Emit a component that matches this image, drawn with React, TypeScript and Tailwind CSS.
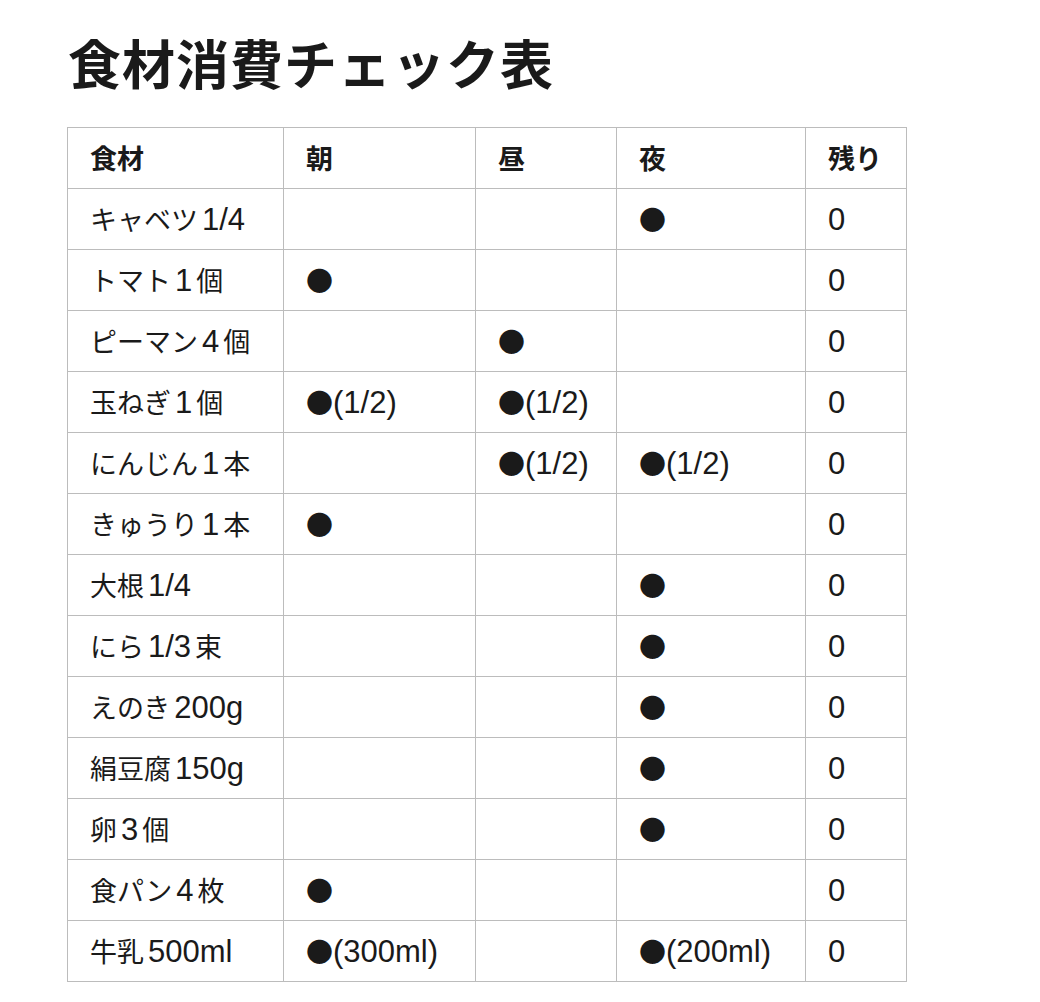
const rows: [string, string, string, string, string][] = [
  ["キャベツ1/4", "", "", "●", "0"],
  ["トマト1個", "●", "", "", "0"],
  ["ピーマン4個", "", "●", "", "0"],
  ["玉ねぎ1個", "●(1/2)", "●(1/2)", "", "0"],
  ["にんじん1本", "", "●(1/2)", "●(1/2)", "0"],
  ["きゅうり1本", "●", "", "", "0"],
  ["大根1/4", "", "", "●", "0"],
  ["にら1/3束", "", "", "●", "0"],
  ["えのき200g", "", "", "●", "0"],
  ["絹豆腐150g", "", "", "●", "0"],
  ["卵3個", "", "", "●", "0"],
  ["食パン4枚", "●", "", "", "0"],
  ["牛乳500ml", "●(300ml)", "", "●(200ml)", "0"],
];

const headers = ["食材", "朝", "昼", "夜", "残り"];
const widths = ["w-[216px]", "w-[192px]", "w-[141px]", "w-[189px]", "w-[101px]"];

// split latin runs out so they get a Helvetica-like face and the small
// gap that iOS puts between kana/kanji and latin letters
function Cell({ text }: { text: string }) {
  const parts = text.split(/([A-Za-z0-9/().]+)/).filter(Boolean);
  return (
    <>
      {parts.map((p, i) => {
        if (!/^[A-Za-z0-9/().]+$/.test(p)) return <span key={i}>{p}</span>;
        const prev = parts[i - 1];
        const next = parts[i + 1];
        const gapL = prev && !prev.endsWith("●");
        const gapR = !!next;
        return (
          <span
            key={i}
            className={`text-[31px] ${gapL ? "ml-[4px]" : ""} ${gapR ? "mr-[4px]" : ""}`}
            style={{ fontFamily: '"Liberation Sans", Arial, sans-serif' }}
          >
            {p}
          </span>
        );
      })}
    </>
  );
}

export default function App() {
  return (
    <div
      className="min-h-screen bg-white text-[#1a1a1a] pl-[67px] pt-[28px]"
      style={{ fontFamily: '"Noto Sans CJK JP", "Noto Sans", sans-serif' }}
    >
      <h1 className="text-[53px] font-bold leading-[68px] tracking-[1px] pl-[1px]">
        食材消費チェック表
      </h1>
      <table className="mt-[31px] border-collapse table-fixed w-[840px] text-[27px]">
        <thead>
          <tr className="h-[61px]">
            {headers.map((h, i) => (
              <th
                key={h}
                className={`${widths[i]} border border-[#bcbcbc] pl-[22px] py-0 text-left font-bold`}
              >
                {h}
              </th>
            ))}
          </tr>
        </thead>
        <tbody>
          {rows.map((r) => (
            <tr key={r[0]} className="h-[61px]">
              {r.map((c, i) => (
                <td
                  key={i}
                  className="border border-[#bcbcbc] pl-[22px] py-0 whitespace-nowrap leading-[40px]"
                >
                  <Cell text={c} />
                </td>
              ))}
            </tr>
          ))}
        </tbody>
      </table>
    </div>
  );
}
